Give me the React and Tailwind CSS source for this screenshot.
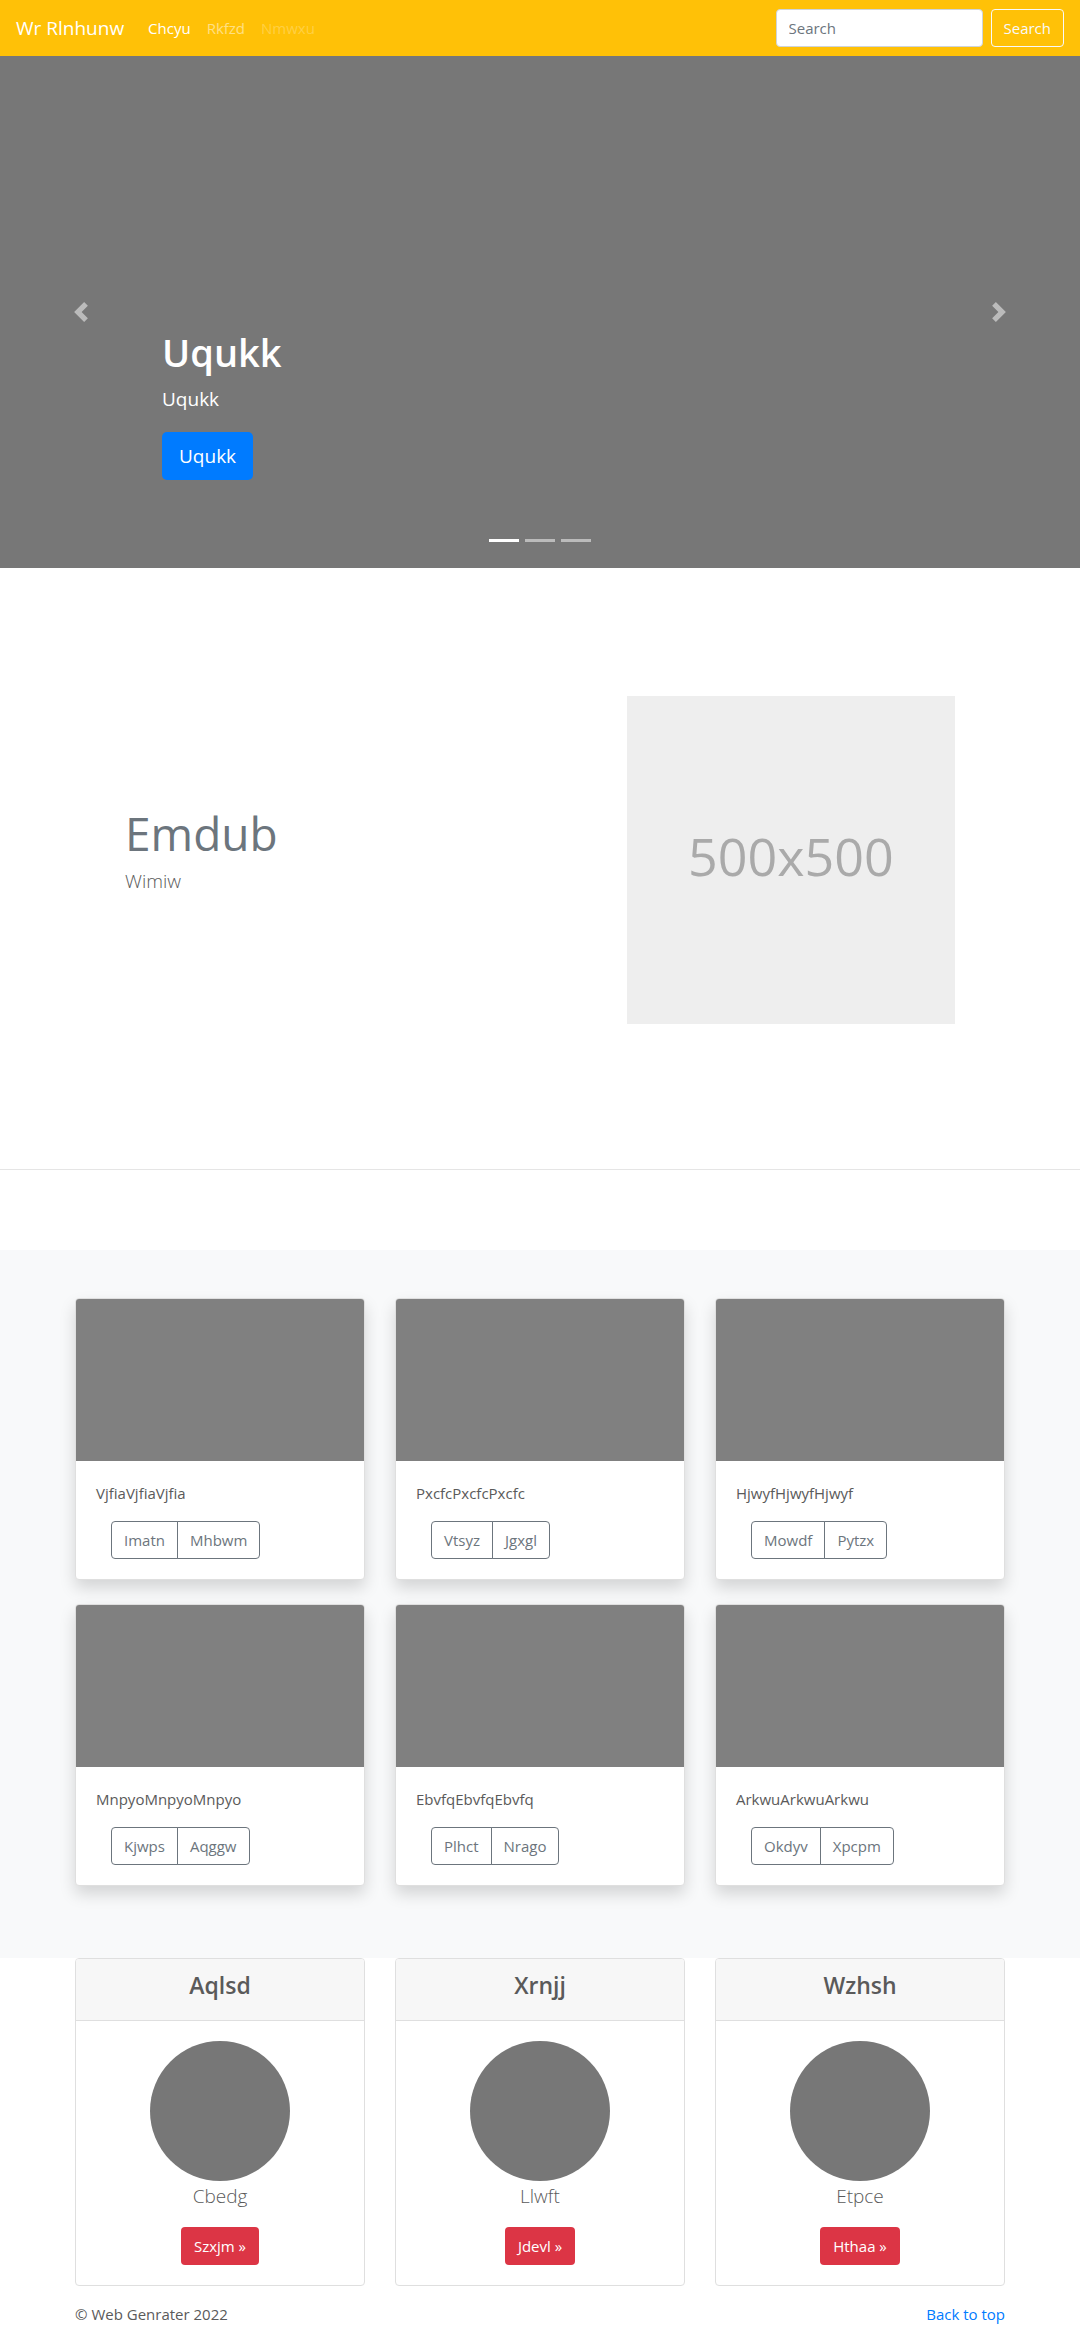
const albumCards = [
  { text: "VjfiaVjfiaVjfia", actions: ["Imatn", "Mhbwm"] },
  { text: "PxcfcPxcfcPxcfc", actions: ["Vtsyz", "Jgxgl"] },
  { text: "HjwyfHjwyfHjwyf", actions: ["Mowdf", "Pytzx"] },
  { text: "MnpyoMnpyoMnpyo", actions: ["Kjwps", "Aqggw"] },
  { text: "EbvfqEbvfqEbvfq", actions: ["Plhct", "Nrago"] },
  { text: "ArkwuArkwuArkwu", actions: ["Okdyv", "Xpcpm"] },
];

const profileCards = [
  { title: "Aqlsd", text: "Cbedg", action: "Szxjm »" },
  { title: "Xrnjj", text: "Llwft", action: "Jdevl »" },
  { title: "Wzhsh", text: "Etpce", action: "Hthaa »" },
];

function Navbar() {
  return (
    <header className="flex items-center bg-[#ffc107] px-4 py-[9px] text-white">
      <a href="#" className="mr-4 text-[19px] leading-[30px]">Wr Rlnhunw</a>
      <nav className="flex flex-1">
        <a href="#" className="px-2 leading-6">Chcyu</a>
        <a href="#" className="px-2 leading-6 text-white/50">Rkfzd</a>
        <a href="#" aria-disabled="true" className="px-2 leading-6 text-white/25">Nmwxu</a>
      </nav>
      <form className="flex gap-2" onSubmit={(e) => e.preventDefault()}>
        <input
          type="text"
          placeholder="Search"
          aria-label="Search"
          className="h-[38px] w-[207px] rounded border border-[#ced4da] bg-white px-3 text-[#495057] placeholder:text-[#6c757d]"
        />
        <button type="submit" className="h-[38px] rounded border border-[#f8f9fa] px-3 text-[#f8f9fa]">
          Search
        </button>
      </form>
    </header>
  );
}

function Chevron({ path }) {
  return (
    <svg viewBox="0 0 8 8" className="size-5 fill-white" aria-hidden="true">
      <path d={path} />
    </svg>
  );
}

function Carousel() {
  return (
    <section className="relative flex h-[512px] bg-[#777] text-white">
      <button aria-label="Previous" className="flex w-[15%] items-center justify-center opacity-50">
        <Chevron path="M5.25 0l-4 4 4 4 1.5-1.5-2.5-2.5 2.5-2.5-1.5-1.5z" />
      </button>
      <div className="flex flex-1 flex-col items-start justify-end pb-[88px]">
        <h1 className="mb-2 text-[38px] leading-[48px] font-semibold">Uqukk</h1>
        <p className="mb-[18px] text-[19px] leading-[30px]">Uqukk</p>
        <a href="#" className="flex h-12 items-center rounded-[5px] bg-[#007bff] px-[17px] text-[19px]">Uqukk</a>
      </div>
      <button aria-label="Next" className="flex w-[15%] items-center justify-center opacity-50">
        <Chevron path="M2.75 0l-1.5 1.5 2.5 2.5-2.5 2.5 1.5 1.5 4-4-4-4z" />
      </button>
      <div className="absolute inset-x-0 bottom-[26px] flex justify-center gap-[6px]">
        <button aria-label="Slide 1" className="h-[3px] w-[30px] bg-white" />
        <button aria-label="Slide 2" className="h-[3px] w-[30px] bg-white/50" />
        <button aria-label="Slide 3" className="h-[3px] w-[30px] bg-white/50" />
      </div>
    </section>
  );
}

function Feature() {
  return (
    <section className="mx-auto flex max-w-[960px] items-center px-[50px] pt-32 pb-[145px]">
      <div className="w-7/12 px-[15px]">
        <h2 className="mb-2 text-[46px] leading-[50px] text-[#6c757d]">Emdub</h2>
        <p className="mb-4 text-[19px] leading-[30px] font-light">Wimiw</p>
      </div>
      <div className="w-5/12 px-[15px]">
        <div
          role="img"
          aria-label="500x500"
          className="flex aspect-square items-center justify-center bg-[#eee] pb-2 text-[52px] text-[#aaa]"
        >
          500x500
        </div>
      </div>
    </section>
  );
}

function AlbumCard({ text, actions }) {
  return (
    <article className="overflow-hidden rounded border border-[#dfdfdf] bg-white shadow-[0_8px_16px_rgba(0,0,0,0.15)]">
      <div className="h-[162px] bg-[#808080]" />
      <div className="p-5">
        <p className="mb-4 leading-6">{text}</p>
        <div className="ml-[15px] flex text-[#6c757d]">
          <button className="h-[38px] rounded-l border border-[#6c757d] px-3">{actions[0]}</button>
          <button className="-ml-px h-[38px] rounded-r border border-[#6c757d] px-3">{actions[1]}</button>
        </div>
      </div>
    </article>
  );
}

function ProfileCard({ title, text, action }) {
  return (
    <article className="overflow-hidden rounded border border-[#dfdfdf] bg-white text-center">
      <h4 className="border-b border-[#dfdfdf] bg-[#f7f7f7] px-5 pt-3 pb-5 text-[23px] leading-[29px] font-semibold">
        {title}
      </h4>
      <div className="flex flex-col items-center p-5">
        <div className="size-[140px] rounded-full bg-[#777]" />
        <p className="mb-4 text-[19px] leading-[30px] font-light">{text}</p>
        <a href="#" className="flex h-[38px] items-center rounded bg-[#dc3545] px-[13px] text-white">{action}</a>
      </div>
    </article>
  );
}

export default function App() {
  return (
    <div className="bg-white font-['Open_Sans','Noto_Sans',sans-serif] text-[15px] text-[#5a5a5a]">
      <Navbar />
      <main>
        <Carousel />
        <Feature />
        <hr className="mb-20 border-t border-black/10" />
        <section className="bg-[#f8f9fa] pt-12 pb-[72px]">
          <div className="mx-auto grid max-w-[960px] grid-cols-3 gap-x-[30px] gap-y-6 px-[15px]">
            {albumCards.map((card) => (
              <AlbumCard key={card.text} {...card} />
            ))}
          </div>
        </section>
        <section className="mx-auto grid max-w-[960px] grid-cols-3 gap-x-[30px] px-[15px]">
          {profileCards.map((card) => (
            <ProfileCard key={card.title} {...card} />
          ))}
        </section>
      </main>
      <footer className="mx-auto flex max-w-[960px] justify-between px-[15px] pt-4 leading-6">
        <p>© Web Genrater 2022</p>
        <a href="#" className="text-[#007bff]">Back to top</a>
      </footer>
    </div>
  );
}
